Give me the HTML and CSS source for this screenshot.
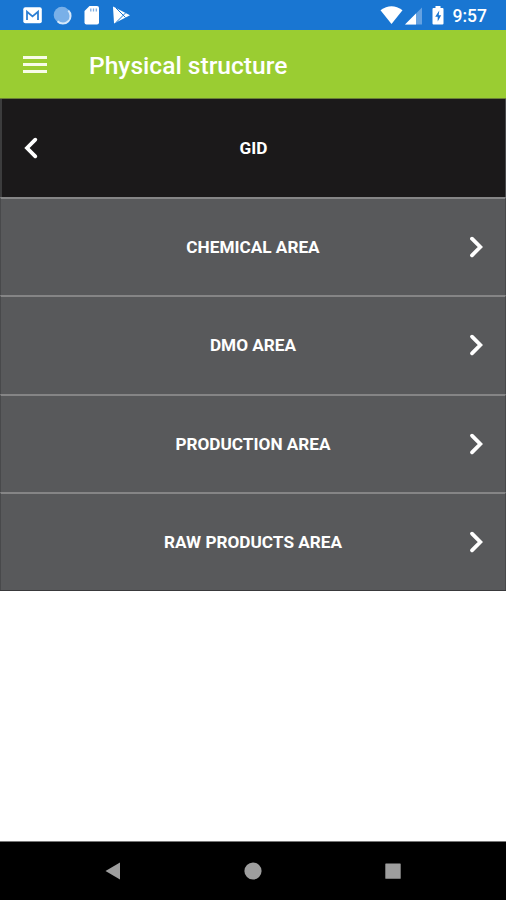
FILE: index.html
```html
<!DOCTYPE html>
<html lang="en">
<head>
<meta charset="utf-8">
<title>Physical structure</title>
<link rel="stylesheet" href="styles.css">
</head>
<body>
<div class="screen">
  <header class="status">
    <svg class="status-icons" width="110" height="30" viewBox="22 0 110 30" fill="#fff">
      <rect x="23.300" y="7.300" width="18.500" height="16" rx="2"/>
      <path d="M27 20v-8.200l5.500 4.600 5.500-4.600V20" fill="none" stroke="#2d7fd4" stroke-width="1.800"/>
      <circle cx="62" cy="15" r="8.300" fill="#79b0e8"/>
      <path d="M68.300 10.500A7.600 7.600 0 0 1 57.500 21.300" fill="none" stroke="#d5e8fa" stroke-width="2"/>
      <path d="M89.500 6H97a2 2 0 0 1 2 2v14.500a2 2 0 0 1-2 2H86.500a2 2 0 0 1-2-2V11z"/>
      <path d="M90.800 8.500v3M93.500 8.500v3M96.300 8.500v3" stroke="#7faee0" stroke-width="1.300"/>
      <path d="M113 6.500 130 15.300 114 23.500z"/>
      <path d="M116 8l9.500 9.500M116 22.500l9.500-9.500" stroke="#1976d2" stroke-width="1"/>
    </svg>
    <div class="status-right">
      <svg width="66" height="30" viewBox="380 0 66 30" fill="#fff">
        <path d="M380.500 10.200Q391.500 2.500 402.500 10.200L391.500 24z"/>
        <path d="M405 24.500 422 7.500v17z" fill="#65a2e1"/>
        <path d="M405 24.500 416 13.500v11z"/>
        <path d="M435.500 6h5v2h2a1 1 0 0 1 1 1v14.500a1 1 0 0 1-1 1h-9a1 1 0 0 1-1-1V9a1 1 0 0 1 1-1h2z"/>
        <path d="M439.300 10.500 435.200 16.700h2.500v4.800l3.500-6.300h-2.500z" fill="#1976d2"/>
      </svg>
      <span class="clock">9:57</span>
    </div>
  </header>
  <div class="appbar">
    <div class="menu"><i></i><i></i><i></i></div>
    <h1>Physical structure</h1>
  </div>
  <main class="list">
    <div class="row current"><svg class="chevron" width="18" height="24" viewBox="0 0 18 24"><path d="M12.300 3.700 4 12l8.300 8.300"/></svg><span>GID</span></div>
    <div class="row"><span>CHEMICAL AREA</span><svg class="chevron" width="18" height="24" viewBox="0 0 18 24"><path d="M6 3.700 14.300 12 6 20.300"/></svg></div>
    <div class="row"><span>DMO AREA</span><svg class="chevron" width="18" height="24" viewBox="0 0 18 24"><path d="M6 3.700 14.300 12 6 20.300"/></svg></div>
    <div class="row"><span>PRODUCTION AREA</span><svg class="chevron" width="18" height="24" viewBox="0 0 18 24"><path d="M6 3.700 14.300 12 6 20.300"/></svg></div>
    <div class="row"><span>RAW PRODUCTS AREA</span><svg class="chevron" width="18" height="24" viewBox="0 0 18 24"><path d="M6 3.700 14.300 12 6 20.300"/></svg></div>
  </main>
  <nav class="navbar">
    <svg width="18" height="18" viewBox="0 0 18 18"><path d="M1.500 9 16 .500v17z"/></svg>
    <svg width="18" height="18" viewBox="0 0 18 18"><circle cx="9" cy="9" r="8.600"/></svg>
    <svg width="18" height="18" viewBox="0 0 18 18"><rect x="1.300" y="1.500" width="15.400" height="15.300" rx=".6"/></svg>
  </nav>
</div>
</body>
</html>
```

FILE: styles.css
```css
* { box-sizing: border-box; }
body { margin: 0; font-family: Roboto, "Liberation Sans", sans-serif; color: #fff; background: #fff; }
.screen { width: 506px; height: 900px; display: flex; flex-direction: column; }
.status { height: 30px; background: #1976d2; display: flex; justify-content: space-between; padding: 0 19px 0 22px; }
.status svg { display: block; }
.status-right { display: flex; gap: 7px; }
.clock { font-size: 17.5px; font-weight: 500; line-height: 32px; white-space: nowrap; }
.appbar { height: 69px; background: #9acd32; border-bottom: 1px solid #6b8038; display: flex; align-items: center; padding-left: 23px; }
.menu { width: 24px; display: flex; flex-direction: column; gap: 4px; }
.menu i { height: 3px; background: #f7fce9; }
h1 { margin: 4px 0 0 42px; font-size: 24.6px; font-weight: 500; line-height: 30px; }
.list { height: 492px; display: grid; grid-template-rows: 98px repeat(4, 98.25px); border-bottom: 1px solid #39393b; }
.row { display: grid; grid-template-columns: 18px 1fr 18px; align-items: center; padding: 0 21px; background: #58595b; border: solid #48494b; border-width: 0 1px; border-top: 2px solid #858586; }
.row span { grid-column: 2; text-align: center; font-size: 17.2px; font-weight: 700; line-height: 20px; }
.row.current { background: #1b191a; border-top: 0; border-left: 2px solid #3c3c3d; }
.chevron { fill: none; stroke: #fff; stroke-width: 3.8; stroke-linecap: round; }
.navbar { margin-top: auto; height: 59px; background: #000; border-top: 1px solid #777; display: flex; justify-content: space-between; align-items: center; padding: 0 104px; }
.navbar svg { fill: #9e9e9e; }
```
